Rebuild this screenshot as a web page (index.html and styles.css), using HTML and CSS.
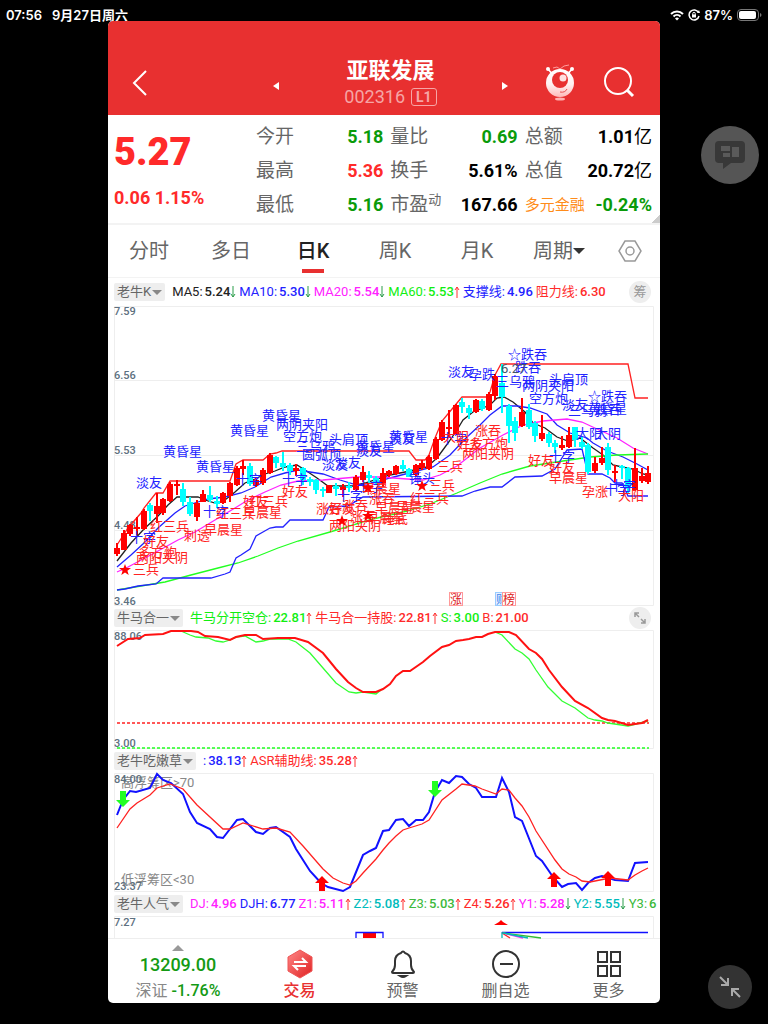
FILE: index.html
```html
<!DOCTYPE html>
<html lang="zh-CN">
<head>
  <meta charset="UTF-8">
  <meta name="viewport" content="width=device-width, initial-scale=1">
  <title>亚联发展 002316</title>
  <link rel="stylesheet" href="styles.css">
</head>
<body>

  <svg width="0" height="0" class="defs" aria-hidden="true">
    <symbol id="up" viewBox="0 0 6 14"><path d="M3 13V2M1 5l2-3 2 3" fill="none" stroke="#f33" stroke-width="1"/></symbol>
    <symbol id="down" viewBox="0 0 6 14"><path d="M3 1v11M1 9l2 3 2-3" fill="none" stroke="#2a9d4a" stroke-width="1"/></symbol>
    <symbol id="star" viewBox="-6 -6 12 12"><path d="M0-6 1.5-1.9H6L2.4.8 3.7 5 0 2.4-3.7 5-2.4.8-6-1.9h4.5z" fill="red"/></symbol>
    <symbol id="buy" viewBox="0 0 14 16"><path d="M7 0l7 7h-4v8H4V7H0z" fill="red"/></symbol>
    <symbol id="sell" viewBox="0 0 14 16"><path d="M7 16l7-7h-4V0H4v9H0z" fill="#2f2"/></symbol>
  </svg>

  <div class="statusbar">
    <span>07:56</span>
    <span class="date">9月27日周六</span>
    <span class="system">
      <svg width="14" height="12" viewBox="0 0 14 12" fill="none" stroke="#fff" stroke-width="2"><path d="M1 5a8.500 8.500 0 0 1 12 0M3.500 7.500a5 5 0 0 1 7 0"/><path d="M5 9.500a3 3 0 0 1 4 0L7 11.500z" fill="#fff" stroke="none"/></svg>
      <svg width="12" height="12" viewBox="0 0 12 12" fill="none" stroke="#fff"><path d="M10.500 3.500A5 5 0 1 0 11 7" stroke-width="1.500"/><path d="M9 4h3l-1-3z" fill="#fff" stroke="none"/><path d="M4 5.500h4v3H4z" fill="#fff" stroke="none"/><path d="M4.800 6V4.500a1.200 1.200 0 0 1 2.400 0V6"/></svg>
      <span>87%</span>
      <svg width="25" height="12" viewBox="0 0 25 12"><rect x=".5" y=".5" width="21" height="11" rx="3.500" fill="none" stroke="#777"/><rect x="2" y="2" width="17" height="8" rx="2" fill="#fff"/><path d="M23 4v4q1.500-.5 1.500-2T23 4z" fill="#777"/></svg>
    </span>
  </div>

  <main class="app">
    <header class="topbar">
      <button class="back" aria-label="返回"><svg width="16" height="26" viewBox="0 0 16 26"><path d="M14 1 2 13l12 12" fill="none" stroke="#fff" stroke-width="2"/></svg></button>
      <div class="stock">
        <button aria-label="上一只"><svg width="7" height="10" viewBox="0 0 7 10"><path d="M6 1v8L0 5z" fill="#fff"/></svg></button>
        <div class="stock-name">
          <h1>亚联发展</h1>
          <p>002316 <span class="level">L1</span></p>
        </div>
        <button aria-label="下一只"><svg width="7" height="10" viewBox="0 0 7 10"><path d="M1 1v8l6-4z" fill="#fff"/></svg></button>
      </div>
      <div class="tools">
        <button aria-label="智能助手">
          <svg width="34" height="38" viewBox="0 0 34 38">
            <defs><linearGradient id="robot" x1="0" y1="0" x2="0" y2="1"><stop offset="0" stop-color="#fff"/><stop offset=".55" stop-color="#fff0f0"/><stop offset="1" stop-color="#ffb9b9"/></linearGradient></defs>
            <path d="M6 5l5 6M30 5l-5 6" stroke="#fff" stroke-width="1.500"/>
            <circle cx="6" cy="5" r="2" fill="#fff"/><circle cx="30" cy="5" r="2" fill="#fff"/>
            <path d="M11 4l4-1 3 2 4-3 5-1" fill="none" stroke="#ff9c9c"/>
            <circle cx="18" cy="19" r="14" fill="url(#robot)"/>
            <circle cx="18" cy="16" r="8" fill="#e83030"/>
            <circle cx="21" cy="14" r="3.500" fill="#ffe0e0"/>
            <path d="M18 28q5 1 7-3" fill="none" stroke="#e85050"/>
            <ellipse cx="18" cy="35" rx="5" ry="1.500" fill="#ffb0b0"/>
          </svg>
        </button>
        <button aria-label="搜索"><svg width="32" height="32" viewBox="0 0 32 32" fill="none" stroke="#fff" stroke-width="2"><circle cx="15" cy="14" r="13"/><path d="M24 23l6 6" stroke-width="3"/></svg></button>
      </div>
    </header>

    <section class="quote">
      <div class="price">
        <strong>5.27</strong>
        <span>0.06 1.15%</span>
      </div>
      <dl>
        <div><dt>今开</dt><dd class="fall">5.18</dd></div>
        <div><dt>量比</dt><dd class="fall">0.69</dd></div>
        <div><dt>总额</dt><dd>1.01<small>亿</small></dd></div>
        <div><dt>最高</dt><dd class="rise">5.36</dd></div>
        <div><dt>换手</dt><dd>5.61%</dd></div>
        <div><dt>总值</dt><dd>20.72<small>亿</small></dd></div>
        <div><dt>最低</dt><dd class="fall">5.16</dd></div>
        <div><dt>市盈<sup>动</sup></dt><dd>167.66</dd></div>
        <div><dt class="sector">多元金融</dt><dd class="fall">-0.24%</dd></div>
      </dl>
    </section>

    <nav class="tabs">
      <a href="#">分时</a>
      <a href="#">多日</a>
      <a href="#" class="active">日K</a>
      <a href="#">周K</a>
      <a href="#">月K</a>
      <a href="#">周期<i class="caret"></i></a>
      <a href="#" aria-label="设置"><svg width="26" height="24" viewBox="0 0 26 24" fill="none" stroke="#999" stroke-width="1.500"><path d="M8 2h10l6 10-6 10H8L2 12z"/><circle cx="13" cy="12" r="4"/></svg></a>
    </nav>

    <section class="panel">
      <div class="legend first">
        <button class="chip">老牛K<i class="caret"></i></button>
        <span class="black">MA5:<b>5.24</b><svg><use href="#down"/></svg></span>
        <span class="blue">MA10:<b>5.30</b><svg><use href="#down"/></svg></span>
        <span class="magenta">MA20:<b>5.54</b><svg><use href="#down"/></svg></span>
        <span class="lime">MA60:<b>5.53</b><svg><use href="#up"/></svg></span>
        <span class="blue">支撑线:<b>4.96</b></span>
        <span class="red">阻力线:<b>6.30</b></span>
        <button class="round">筹</button>
      </div>
      <svg class="chart" viewBox="114 306 540 300">
        <path class="grid" d="M114.500 306.500h539v299h-539zM114 380.500h540M114 455.500h540M114 530.500h540"/>
        <g class="axis">
          <text x="114" y="315">7.59</text><text x="114" y="379">6.56</text><text x="114" y="454">5.53</text><text x="114" y="529">4.48</text><text x="114" y="605">3.46</text>
        </g>
        <g class="lines">
          <polyline stroke="#f22" points="117,545 128,528 141,513 144,508 156,493 163,493 170,481 230,481 236,464 243,460 263,460 270,454 276,453 282,451 409,451 416,460 425,460 429,455 435,438 442,421 457,403 462,397 487,397 490,392 495,375 501,364 628,364 635,398 648,398"/>
          <polyline stroke="#222" points="117,561 131,543 144,529 158,516 168,505 177,497 198,497 205,500 215,503 225,500 235,492 245,483 255,479 265,474 275,471 285,467 297,465 305,470 317,478 328,486 353,486 365,483 390,475 410,471 427,467 437,458 448,443 457,430 463,420 473,412 490,405 497,398 504,397 513,402 525,412 533,423 545,428 557,437 568,441 580,438 593,448 603,455 613,465 622,467 633,469 643,474 648,475"/>
          <polyline stroke="#22f" points="117,567 131,555 144,543 158,528 175,513 185,506 198,502 208,499 225,497 241,493 255,487 271,477 285,473 298,470 310,472 323,474 340,480 357,485 373,483 390,478 413,472 433,467 450,455 467,437 480,425 490,415 502,406 517,406 530,408 547,414 557,425 570,433 587,438 593,443 607,451 623,457 637,464 648,470"/>
          <polyline stroke="#f2f" points="117,572 128,567 145,558 158,551 178,540 195,532 215,520 235,508 248,500 265,492 281,485 298,481 323,480 357,477 380,477 407,479 423,480 440,475 457,466 480,448 503,435 523,425 543,421 567,419 582,422 597,429 617,438 633,448 648,454"/>
          <polyline stroke="#2f2" points="117,590 141,586 165,582 191,575 218,568 238,563 258,556 278,548 298,541 330,532 373,519 407,511 430,504 457,493 480,483 502,474 530,466 563,461 590,457 617,455 648,454"/>
          <polyline stroke="#22f" points="117,590 125,589 138,586 156,584 163,578 211,578 225,574 230,572 236,558 241,555 250,549 256,536 270,528 276,527 283,527 290,520 323,520 329,507 348,506 363,497 462,496 475,491 490,487 502,487 515,477 542,476 555,469 567,450 582,449 588,474 602,474 610,478 615,483 622,483 628,496 648,496"/>
        </g>
        <g id="candles"></g>
        <g class="signal blue">
          <text x="136" y="487">淡友</text><text x="163" y="456">黄昏星</text><text x="196" y="471">黄昏星</text><text x="230" y="435">黄昏星</text><text x="262" y="420">黄昏星</text>
          <text x="276" y="429">两阴夹阳</text><text x="283" y="441">空方炮</text><text x="329" y="444">头肩顶</text><text x="296" y="451">三乌鸦</text><text x="302" y="459">圆弧顶</text>
          <text x="322" y="469">淡友</text><text x="335" y="467">淡友</text><text x="356" y="451">黄昏星</text><text x="356" y="455">淡友</text><text x="389" y="441">黄昏星</text><text x="389" y="443">淡友</text>
          <text x="409" y="483">锤头</text><text x="130" y="542">十字</text><text x="203" y="516">十字</text><text x="236" y="484">十字</text><text x="282" y="484">十字</text><text x="337" y="500">十字</text><text x="357" y="491">十字</text><text x="441" y="443">十字</text>
          <text x="448" y="376">淡友</text><text x="469" y="379">孕跌</text><text x="508" y="359">☆跌吞</text><text x="515" y="372">跌吞</text><text x="496" y="386">三乌鸦</text><text x="522" y="390">两阴夹阳</text><text x="549" y="384">头肩顶</text><text x="529" y="403">空方炮</text>
          <text x="562" y="409">淡友</text><text x="588" y="401">☆跌吞</text><text x="568" y="415">三乌鸦</text><text x="588" y="413">黄昏星</text><text x="595" y="414">跌吞</text><text x="576" y="438">大阳</text><text x="595" y="438">大阴</text><text x="549" y="461">十字</text><text x="604" y="494">十字</text><text x="610" y="490">十字</text>
        </g>
        <g class="signal red">
          <text x="150" y="531">红三兵</text><text x="143" y="546">好友</text><text x="138" y="557">多方炮</text><text x="136" y="562">两阳夹阴</text><text x="133" y="574">三兵</text><text x="184" y="540">刺透</text><text x="204" y="534">早晨星</text>
          <text x="216" y="518">红三兵</text><text x="243" y="517">早晨星</text><text x="243" y="506">好友</text><text x="249" y="506">红三兵</text><text x="282" y="496">好友</text>
          <text x="316" y="513">涨吞</text><text x="329" y="513">好友</text><text x="342" y="510">涨吞</text><text x="362" y="493">早晨星</text><text x="369" y="503">涨吞</text><text x="375" y="512">早晨星</text><text x="396" y="511">早晨星</text><text x="410" y="503">红三兵</text>
          <text x="429" y="490">三兵</text><text x="437" y="471">三兵</text><text x="329" y="530">两阳夹阴</text><text x="350" y="521">涨吞</text><text x="366" y="522">早晨星</text><text x="382" y="523">锤底</text>
          <text x="443" y="441">大阳</text><text x="475" y="435">涨吞</text><text x="457" y="449">好友</text><text x="469" y="448">多方炮</text><text x="462" y="458">两阳夹阴</text><text x="528" y="465">好友</text><text x="549" y="472">好友</text><text x="549" y="482">早晨星</text><text x="582" y="496">孕涨</text><text x="618" y="500">大阳</text>
          <use href="#star" x="119" y="564" width="12" height="12"/><use href="#star" x="362" y="482" width="12" height="12"/><use href="#star" x="416" y="480" width="12" height="12"/><use href="#star" x="336" y="515" width="12" height="12"/><use href="#star" x="362" y="510" width="12" height="12"/>
        </g>
        <text class="peak" x="501" y="373">6.27</text>
        <g class="event">
          <rect x="495.500" y="592.500" width="13" height="13" fill="#e6f1ff" stroke="#9cf"/><text x="496" y="604" fill="#48e">财</text>
          <rect x="449.500" y="592.500" width="13" height="13" fill="#fff" stroke="#f99"/><text x="450" y="604" fill="#d22">涨</text>
          <rect x="502.500" y="592.500" width="13" height="13" fill="#fff" stroke="#f99"/><text x="503" y="604" fill="#d22">榜</text>
        </g>
      </svg>
    </section>

    <section class="panel">
      <div class="legend">
        <button class="chip">牛马合一<i class="caret"></i></button>
        <span class="lime">牛马分开空仓:<b>22.81</b><svg><use href="#up"/></svg></span>
        <span class="red">牛马合一持股:<b>22.81</b><svg><use href="#up"/></svg></span>
        <span class="lime">S:<b>3.00</b></span>
        <span class="red">B:<b>21.00</b></span>
        <button class="round" aria-label="展开"><svg width="14" height="14" viewBox="0 0 14 14" fill="none" stroke="#999" stroke-width="1.500"><path d="M2 6V2h4M2 2l4 4M12 8v4H8M12 12L8 8"/></svg></button>
      </div>
      <svg class="chart" viewBox="114 630 540 119">
        <path class="grid" d="M114.500 630.500h539v118h-539z"/>
        <g class="axis"><text x="114" y="640">88.06</text><text x="114" y="747">3.00</text></g>
        <g class="lines">
          <path stroke="#f22" stroke-dasharray="3 2" d="M117 723h532"/>
          <path stroke="#2f2" stroke-dasharray="3 2" d="M117 748h532"/>
          <polyline stroke="#3f3" points="181,631 190,635 196,637 208,638 216,641 223,642 230,640 236,637 245,636 256,642 263,641 270,639 288,639 296,642 310,653 323,668 336,683 349,692 356,693 363,692 376,694 381,690"/>
          <polyline stroke="#3f3" points="495,632 502,635 515,649 522,653 529,659 536,670 548,687 562,701 575,708 588,718 595,720 602,721 608,723 628,726 648,721"/>
          <polyline class="thick" stroke="#f11" points="117,646 128,639 140,638 145,635 163,634 171,631 191,631 198,632 205,636 218,637 230,640 236,637 245,635 256,635 263,639 278,638 295,638 308,642 323,653 336,669 348,682 356,688 363,692 376,692 383,689 390,684 396,676 403,671 410,671 423,662 430,656 442,647 449,645 456,641 463,640 469,639 476,637 482,637 488,634 495,632 509,632 516,635 529,649 536,653 542,659 549,670 562,687 575,701 588,708 602,718 608,720 615,721 628,725 642,723 648,720"/>
        </g>
      </svg>
    </section>

    <section class="panel">
      <div class="legend">
        <button class="chip">老牛吃嫩草<i class="caret"></i></button>
        <span class="blue">:<b>38.13</b><svg><use href="#up"/></svg></span>
        <span class="red">ASR辅助线:<b>35.28</b><svg><use href="#up"/></svg></span>
      </div>
      <svg class="chart" viewBox="114 773 540 119">
        <path class="grid" d="M114.500 773.500h539v118h-539z"/>
        <g class="zone"><text x="121" y="787">高浮筹区&gt;70</text><text x="121" y="884">低浮筹区&lt;30</text></g>
        <g class="axis"><text x="114" y="783">84.00</text><text x="114" y="890">23.37</text></g>
        <g class="lines">
          <polyline class="thick" stroke="#11f" points="117,815 123,800 130,791 136,792 150,788 157,774 163,780 171,783 183,794 190,812 197,823 210,829 217,837 223,838 237,820 243,819 256,832 263,834 270,828 276,827 290,837 296,849 310,871 321,883 328,887 343,891 350,887 363,855 370,851 376,848 383,831 389,830 396,820 403,819 409,826 416,820 423,820 429,812 435,792 442,780 449,783 456,776 462,777 469,784 476,788 482,797 496,797 502,778 509,792 515,817 522,821 536,856 542,861 553,877 562,887 568,884 576,883 582,890 588,883 595,878 602,876 615,880 628,881 635,863 648,862"/>
          <polyline stroke="#f22" points="117,828 130,809 137,803 150,795 157,788 170,784 183,789 197,805 223,829 230,829 243,823 263,829 276,828 290,832 303,846 323,869 333,878 343,883 350,885 356,881 363,873 376,859 383,850 389,843 396,836 403,830 409,828 422,824 429,820 442,800 456,789 462,784 475,786 482,789 496,794 502,789 509,790 515,798 522,806 529,817 536,831 555,860 562,869 569,874 576,877 582,881 590,882 610,878 628,880 635,875 642,871 648,868"/>
        </g>
        <use href="#sell" x="116" y="791" width="14" height="16"/><use href="#sell" x="428" y="781" width="14" height="16"/>
        <use href="#buy" x="315" y="876" width="14" height="16"/><use href="#buy" x="547" y="872" width="14" height="16"/><use href="#buy" x="601" y="871" width="14" height="16"/>
      </svg>
    </section>

    <section class="panel">
      <div class="legend">
        <button class="chip">老牛人气<i class="caret"></i></button>
        <span class="magenta">DJ:<b>4.96</b></span>
        <span class="blue">DJH:<b>6.77</b></span>
        <span class="magenta">Z1:<b>5.11</b><svg><use href="#up"/></svg></span>
        <span class="teal">Z2:<b>5.08</b><svg><use href="#up"/></svg></span>
        <span class="green">Z3:<b>5.03</b><svg><use href="#up"/></svg></span>
        <span class="red">Z4:<b>5.26</b><svg><use href="#up"/></svg></span>
        <span class="magenta">Y1:<b>5.28</b><svg><use href="#down"/></svg></span>
        <span class="teal">Y2:<b>5.55</b><svg><use href="#down"/></svg></span>
        <span class="green">Y3:<b>6</b></span>
      </div>
      <svg class="chart" viewBox="114 916 540 22">
        <path class="grid" d="M114.500 938v-21.500h539V938"/>
        <g class="axis"><text x="114" y="926">7.27</text></g>
        <path d="M363 932h13v6h-13zM494 925l5-3 2-2 2 2 5 3z" fill="red"/>
        <g class="lines">
          <path stroke="#11f" d="M356 938v-5.500h27v5.500M502 932.500h146"/>
          <path stroke="#f22" d="M502 933l8 5"/><path stroke="#f2f" d="M503 933l20 5"/><path stroke="#3b3" d="M503 933l38 5"/><path stroke="#0bb" d="M502 932v6M503 933l25 5"/>
        </g>
      </svg>
    </section>

    <footer class="bottombar">
      <a href="#" class="index">
        <i class="caret"></i>
        <strong>13209.00</strong>
        <span>深证 <b>-1.76%</b></span>
      </a>
      <a href="#" class="trade">
        <svg width="30" height="30" viewBox="0 0 30 30"><defs><linearGradient id="hex" x1="0" y1="0" x2="1" y2="1"><stop offset="0" stop-color="#f88"/><stop offset="1" stop-color="#e02020"/></linearGradient></defs><path d="M15 1l12 7v14l-12 7L3 22V8z" fill="url(#hex)" stroke="#e55" stroke-linejoin="round"/><path d="M9 13h12l-4-4M21 17H9l4 4" fill="none" stroke="#fff" stroke-width="2"/></svg>
        交易
      </a>
      <a href="#">
        <svg width="30" height="30" viewBox="0 0 30 30" fill="none" stroke="#333" stroke-width="2"><path d="M4 23c2-2 3-4 3-7v-4c0-5 3-7 6-8q2-3 4 0c3 1 6 3 6 8v4c0 3 1 5 3 7q0 1-1 1H5q-1 0-1-1z"/><path d="M12 27q3 2 6 0z" fill="#333"/></svg>
        预警
      </a>
      <a href="#">
        <svg width="30" height="30" viewBox="0 0 30 30" fill="none" stroke="#333" stroke-width="2"><circle cx="15" cy="15" r="13"/><path d="M9 15h13"/></svg>
        删自选
      </a>
      <a href="#">
        <svg width="30" height="30" viewBox="0 0 30 30" fill="none" stroke="#333" stroke-width="2"><path d="M4 3h9v10H4zM17 3h9v10h-9zM4 17h9v10H4zM17 17h9v10h-9z"/></svg>
        更多
      </a>
    </footer>
  </main>

  <aside class="floating">
    <button class="chat" aria-label="反馈"><svg width="30" height="28" viewBox="0 0 30 28"><path d="M4 0h22q4 0 4 4v14q0 4-4 4H16l-8 6v-6H4q-4 0-4-4V4q0-4 4-4z" fill="#383838"/><path d="M6 5h9v5H6zM8 12h7v4H8zM17 6h7v10h-7z" fill="#5a5a5a"/></svg></button>
    <button class="shrink" aria-label="缩小"><svg width="22" height="22" viewBox="0 0 22 22" fill="none" stroke="#aaa" stroke-width="2"><path d="M1 1l8 8M9 2v7H2M21 21l-8-8M13 20v-7h7"/></svg></button>
  </aside>

  <script src="chart.js"></script>
</body>
</html>
```

FILE: styles.css
```css
* {
  margin: 0;
  padding: 0;
  box-sizing: border-box;
}

body {
  min-height: 100vh;
  display: grid;
  grid-template-columns: 108px 1fr 108px;
  grid-template-rows: 21px 1fr;
  background: #000;
  font-family: Roboto, "Noto Sans CJK SC", sans-serif;
  color: #666;
}

button {
  border: none;
  background: none;
  font: inherit;
  color: inherit;
  cursor: pointer;
}

a {
  color: inherit;
  text-decoration: none;
}

svg {
  display: block;
}

.defs {
  position: absolute;
}

.caret {
  display: inline-block;
  border: 5px solid transparent;
  border-top-color: #888;
  border-bottom: none;
}

.black { color: #222; }
.blue { color: #2222ff; fill: #2222ff; }
.magenta { color: #ff22ff; }
.lime { color: #11ee11; }
.red { color: #ff2a2a; fill: #ff2222; }
.teal { color: #00bbbb; }
.green { color: #3cb93c; }

/* status bar */
.statusbar {
  grid-column: 1 / 4;
  display: flex;
  gap: 10px;
  padding: 9px 6px 0;
  color: #fff;
  font-family: Inter, "Noto Sans CJK SC", sans-serif;
  font-size: 13px;
  font-weight: 600;
  line-height: 12px;
}

.system {
  margin-left: auto;
  display: flex;
  gap: 4px;
}

/* main window */
.app {
  grid-column: 2;
  align-self: start;
  min-width: 0;
  background: #fff;
  border-radius: 5px;
  overflow: hidden;
}

.topbar {
  display: grid;
  grid-template-columns: 165px 1fr 152px;
  align-items: center;
  height: 94px;
  padding-top: 36px;
  background: #e83030;
  color: #fff;
}

.back {
  justify-self: start;
  margin-left: 24px;
  padding-bottom: 6px;
}

.stock {
  display: flex;
  justify-content: space-between;
  align-items: center;
}

.stock-name {
  text-align: center;
}

.stock-name h1 {
  font-size: 22px;
  line-height: 28px;
  font-weight: 700;
}

.stock-name p {
  display: flex;
  align-items: center;
  gap: 6px;
  font-size: 18px;
  line-height: 24px;
  padding-bottom: 6px;
  color: #f6a5a5;
}

.level {
  border: 1px solid #f6a5a5;
  border-radius: 3px;
  padding: 0 4px;
  font-size: 14px;
  font-weight: 700;
  line-height: 16px;
}

.tools {
  display: flex;
  justify-content: flex-end;
  align-items: center;
  gap: 27px;
  padding: 0 25px 6px 0;
}

.quote {
  display: flex;
  gap: 12px;
  padding: 5px 8px 1px 6px;
  border-bottom: 2px solid #f3f3f3;
  background: linear-gradient(135deg, transparent 50%, #ccc 50%) right bottom / 9px 9px no-repeat;
}

.price {
  width: 130px;
  color: #ff2a2a;
  font-weight: 700;
}

.price strong {
  display: block;
  font-size: 38px;
  line-height: 64px;
}

.price span {
  font-size: 18px;
  line-height: 28px;
  white-space: nowrap;
}

.quote dl {
  flex: 1;
  display: grid;
  grid-template-columns: repeat(3, 1fr);
  column-gap: 7px;
  font-size: 19px;
  line-height: 34px;
}

.quote dl div {
  display: flex;
  justify-content: space-between;
  height: 34px;
  white-space: nowrap;
}

.quote dd {
  color: #000;
  font-size: 18px;
  font-weight: 700;
}

.quote dd small {
  font-size: 18px;
  font-weight: 400;
}

.quote dd.rise { color: #ff2a2a; }
.quote dd.fall { color: #0a9b0a; }

.quote sup {
  font-size: 13px;
  line-height: 1px;
}

.quote .sector {
  color: #ff8c1a;
  font-size: 15px;
}

.tabs {
  display: grid;
  grid-template-columns: repeat(6, 1fr) 60px;
  border-bottom: 1px solid #f3f3f3;
  font-size: 20px;
  line-height: 52px;
  text-align: center;
}

.tabs a {
  display: flex;
  justify-content: center;
  align-items: center;
  white-space: nowrap;
}

.tabs .caret {
  border-width: 6px;
  border-top-color: #333;
  border-bottom: none;
}

.tabs .active {
  color: #222;
  font-weight: 500;
  background: linear-gradient(#e83030, #e83030) center 44px / 22px 4px no-repeat;
}

/* indicator panels */
.panel {
  padding: 0 6px;
}

.legend {
  display: flex;
  align-items: center;
  gap: 3px;
  height: 24px;
  margin-right: -6px;
  overflow: hidden;
  font-size: 13px;
  line-height: 18px;
  white-space: nowrap;
}

.legend.first {
  height: 28px;
}

.legend span {
  display: flex;
  align-items: center;
}

.legend b {
  font-weight: 500;
  padding-left: 2px;
}

.legend span svg {
  width: 6px;
  height: 14px;
}

.chip {
  display: flex;
  align-items: center;
  gap: 1px;
  margin-right: 4px;
  padding: 0 3px;
  border-radius: 2px;
  background: #eee;
}

.round {
  display: flex;
  justify-content: center;
  align-items: center;
  width: 22px;
  height: 22px;
  margin: 0 9px 0 auto;
  border-radius: 50%;
  background: #eee;
  color: #999;
}

.chart {
  width: 100%;
  overflow: visible;
  font-size: 13px;
}

.grid {
  fill: none;
  stroke: #eee;
}

.axis {
  fill: #5d7080;
  font-size: 11px;
  font-weight: 500;
}

.zone {
  fill: #888;
}

.peak {
  fill: #456;
}

.lines {
  fill: none;
  stroke-width: 1.3;
}

.thick {
  stroke-width: 2;
}

.event {
  font-size: 12px;
}

.candle-up {
  fill: #ff0000;
}

.candle-down {
  fill: #00ffff;
}

/* bottom bar */
.bottombar {
  display: grid;
  grid-template-columns: 140px repeat(4, 1fr);
  height: 65px;
  border-top: 1px solid #eee;
  font-size: 16px;
  line-height: 24px;
}

.bottombar a {
  display: flex;
  flex-direction: column;
  align-items: center;
  padding-top: 10px;
}

.bottombar .index {
  padding-top: 6px;
  color: #888;
}

.index .caret {
  border: 6px solid transparent;
  border-top: none;
  border-bottom-color: #999;
}

.index strong {
  color: #149a14;
  font-size: 18px;
  font-weight: 500;
  line-height: 28px;
}

.index b {
  color: #149a14;
  font-weight: 500;
}

.bottombar .trade {
  color: #e83030;
  font-weight: 500;
}

/* floating buttons */
.floating {
  grid-column: 3;
  display: flex;
  flex-direction: column;
  justify-content: space-between;
  align-items: center;
  padding: 105px 0 15px 32px;
}

.floating button {
  display: flex;
  justify-content: center;
  align-items: center;
  border-radius: 50%;
}

.chat {
  width: 58px;
  height: 58px;
  background: #555;
}

.shrink {
  width: 44px;
  height: 44px;
  background: #333;
}
```

FILE: chart.js
```js
// [up, body top, body bottom, high, low]
const candles = [
  [1, 548, 554, 543, 556], [1, 533, 550, 530, 550], [1, 525, 534, 524, 536], [1, 527, 529, 517, 535], [1, 511, 529, 509, 530],
  [0, 505, 511, 503, 521], [1, 506, 514, 493, 523], [1, 499, 513, 498, 515], [1, 484, 501, 482, 502], [1, 484, 486, 480, 495],
  [0, 489, 502, 483, 506], [0, 502, 514, 497, 516], [1, 503, 517, 500, 521], [1, 494, 502, 490, 502], [0, 495, 500, 486, 502],
  [0, 501, 504, 496, 508], [1, 493, 503, 492, 504], [1, 483, 496, 482, 502], [1, 468, 485, 466, 486], [1, 466, 469, 460, 475],
  [0, 466, 484, 463, 486], [1, 480, 485, 477, 487], [1, 470, 483, 468, 485], [1, 455, 473, 453, 474], [0, 457, 463, 456, 468],
  [0, 463, 467, 452, 471], [0, 465, 471, 463, 475], [1, 468, 471, 464, 476], [0, 468, 480, 467, 485], [0, 479, 482, 477, 486],
  [0, 480, 490, 479, 494], [0, 489, 491, 487, 497], [1, 485, 493, 485, 493], [0, 486, 489, 483, 496], [1, 487, 490, 484, 497],
  [0, 486, 488, 482, 492], [1, 477, 490, 475, 491], [1, 472, 480, 466, 482], [0, 475, 478, 471, 483], [0, 478, 483, 476, 485],
  [1, 473, 483, 468, 487], [1, 471, 475, 470, 477], [1, 466, 474, 465, 475], [0, 465, 469, 460, 471], [0, 469, 477, 468, 477],
  [1, 465, 475, 464, 476], [1, 463, 468, 460, 470], [1, 457, 469, 455, 470], [1, 439, 459, 437, 460], [1, 422, 440, 420, 441],
  [1, 427, 429, 410, 438], [1, 405, 434, 404, 435], [0, 402, 407, 398, 413], [0, 408, 413, 405, 419], [1, 400, 412, 399, 413],
  [0, 401, 409, 399, 411], [1, 394, 410, 392, 411], [1, 376, 396, 374, 400], [0, 383, 397, 364, 413], [0, 406, 426, 404, 443],
  [0, 421, 433, 417, 441], [1, 412, 426, 398, 427], [0, 410, 427, 404, 429], [0, 423, 436, 421, 442], [1, 433, 439, 415, 441],
  [0, 434, 443, 432, 447], [0, 443, 447, 440, 453], [1, 445, 448, 436, 450], [1, 435, 447, 427, 448], [0, 427, 440, 427, 447],
  [0, 442, 447, 437, 449], [0, 445, 472, 443, 474], [1, 463, 471, 457, 473], [1, 458, 463, 447, 465], [0, 447, 470, 443, 475],
  [1, 471, 473, 465, 482], [0, 466, 468, 465, 479], [0, 468, 487, 467, 493], [1, 468, 490, 448, 491], [1, 476, 481, 468, 483],
  [1, 473, 482, 466, 484]
];

const layer = document.getElementById("candles");
const step = 6.64;

candles.forEach(([up, top, bottom, high, low], i) => {
  const x = Math.round(117 + i * step);
  const path = document.createElementNS("http://www.w3.org/2000/svg", "path");
  path.setAttribute("class", up ? "candle-up" : "candle-down");
  path.setAttribute("d", `M${x - 3} ${top}h6V${bottom}h-6zM${x - 1} ${high}h2V${low}h-2z`);
  layer.appendChild(path);
});
```
